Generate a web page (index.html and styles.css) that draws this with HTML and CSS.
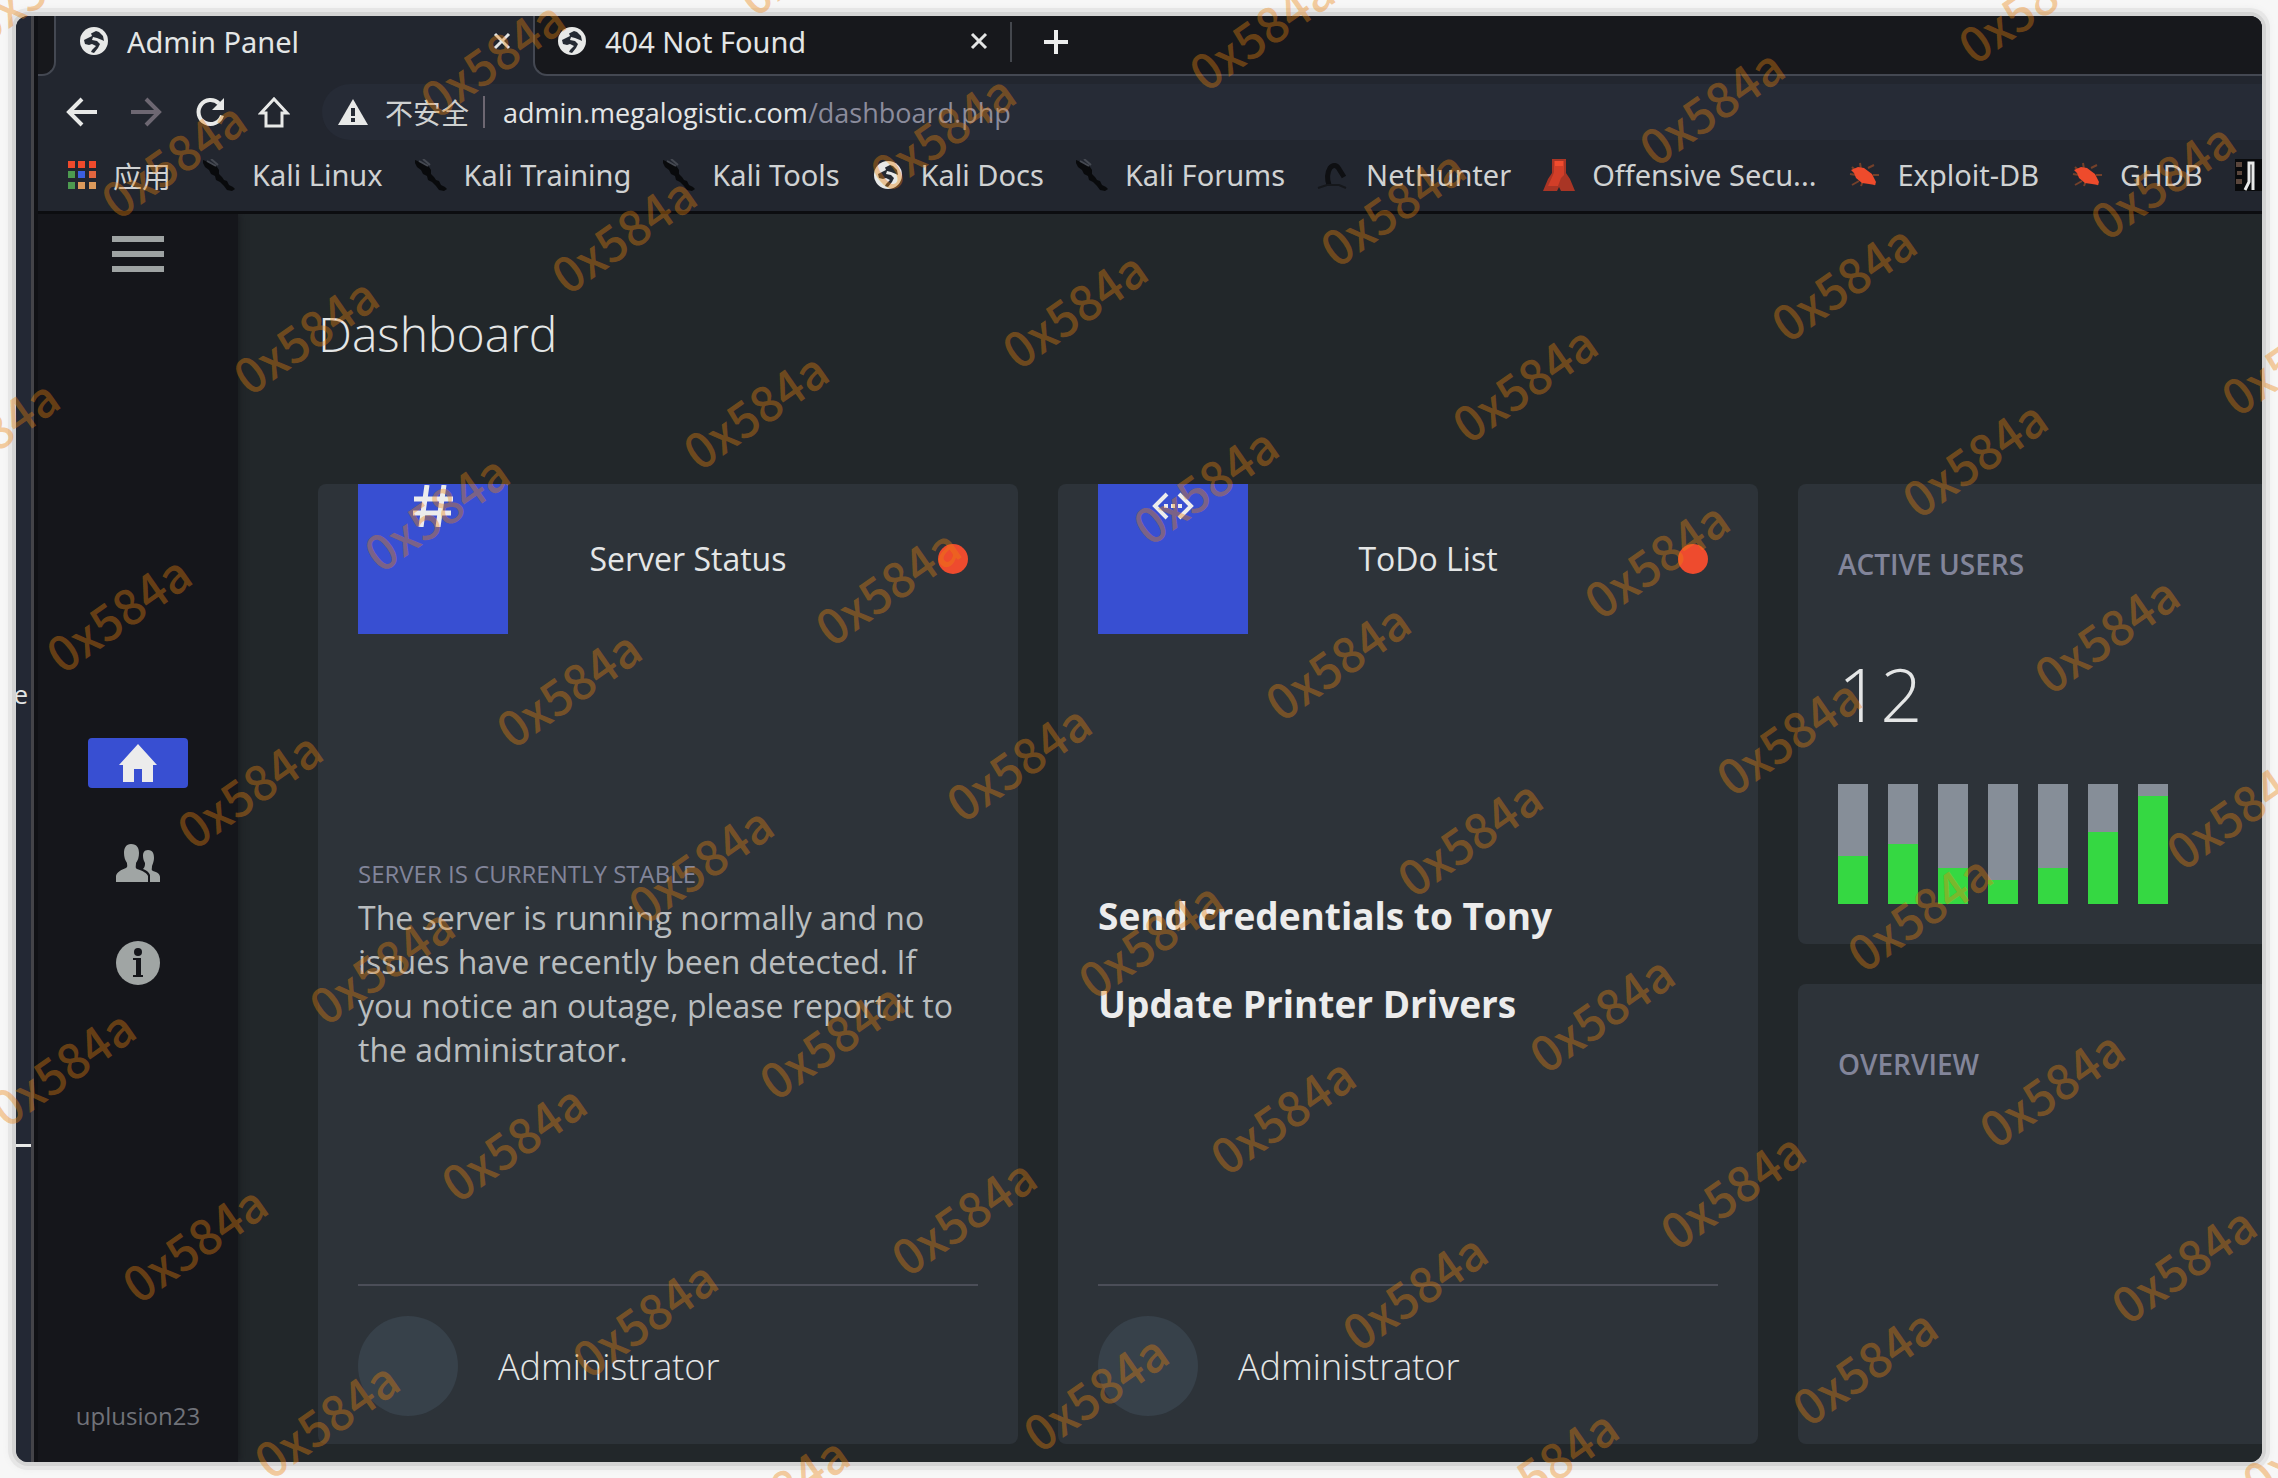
FILE: index.html
```html
<!DOCTYPE html>
<html lang="zh-CN">
<head>
<meta charset="utf-8">
<title>Admin Panel</title>
<link rel="stylesheet" href="styles.css">
</head>
<body>
<svg class="defs" aria-hidden="true">
  <symbol id="globe" viewBox="0 0 28 28"><circle cx="14" cy="14" r="14" fill="#e8e9e8"/><path d="M16 4L11 6.500l1 2.500-4 2-4 2 1 4 4 1 3-1 4 2-4 4-1 2 3 1 4-5 2-4-3-3-5-1 1-3 4 1 5 2 2 1-1-5-4-4z" fill="#252a33"/></symbol>
  <symbol id="close" viewBox="0 0 18 18"><path d="M2 2l14 14M16 2L2 16" stroke="#e4e5e5" stroke-width="3" fill="none"/></symbol>
  <symbol id="kali" viewBox="0 0 32 32"><path d="M0 1l5 2 6 2 3 3 2 3 0 4 3 3 2 3 3 1 2 4 4 2 2 2-3 2-5-1-3-4-4-4-4-2-1-4-4-2-2-4-4-3-2-4z" fill="#090a0c"/><path d="M4 2l9 5M8 0l7 6" stroke="#454951" stroke-width="2"/></symbol>
  <symbol id="bug" viewBox="0 0 32 32"><path d="M4 8l4 4M12 4l1 6M20 9l6-3M25 16h6M2 15l6 1M4 26l7-4M13 27l2-5M27 26l-3-4" stroke="#74402a" stroke-width="2"/><path d="M3 11l7-3 6 1 8 6 4 8-1 3-6-1-7-1-6-5-2-5z" fill="#ee4b2c"/></symbol>
</svg>
<div class="desktop">
  <div class="behind"><span class="behind-text">e</span><i class="behind-line"></i></div>
  <div class="browser">
    <div class="tabs">
      <div class="tab-prev"></div>
      <div class="tab active"><svg class="fav"><use href="#globe"/></svg><span class="tab-title">Admin Panel</span><button class="icon-btn" aria-label="Close tab"><svg class="x"><use href="#close"/></svg></button></div>
      <div class="tab inactive"><svg class="fav"><use href="#globe"/></svg><span class="tab-title">404 Not Found</span><button class="icon-btn" aria-label="Close tab"><svg class="x"><use href="#close"/></svg></button></div>
      <div class="strip"><i class="strip-sep"></i><button class="icon-btn" aria-label="New tab"><svg class="plus" viewBox="0 0 24 24"><path d="M12 0v24M0 12h24" stroke="#eceded" stroke-width="4"/></svg></button></div>
    </div>
    <div class="toolbar">
      <button class="icon-btn" aria-label="Back"><svg class="ti" viewBox="0 0 32 32"><path d="M31 16H4M16 3L3 16l13 13" fill="none" stroke="#e8e9e8" stroke-width="4"/></svg></button>
      <button class="icon-btn" aria-label="Forward"><svg class="ti" viewBox="0 0 32 32"><path d="M1 16h27M16 3l13 13-13 13" fill="none" stroke="#6d6772" stroke-width="4"/></svg></button>
      <button class="icon-btn" aria-label="Reload"><svg class="ti" viewBox="0 0 32 32"><path d="M28 19.500A12 12 0 1 1 25 7.500" fill="none" stroke="#e8e9e8" stroke-width="4"/><path d="M30 2v12H18z" fill="#e8e9e8"/></svg></button>
      <button class="icon-btn" aria-label="Home"><svg class="ti" viewBox="0 0 32 32"><path d="M16 3L3 17h5v13h16V17h5z" fill="none" stroke="#e8e9e8" stroke-width="3"/></svg></button>
      <div class="address">
        <svg class="warn" viewBox="0 0 30 26"><path d="M15 0l15 26H0z" fill="#e8e9e8"/><path d="M15 9v8M15 19v4" stroke="#252a34" stroke-width="4"/></svg>
        <span class="insecure">不安全</span><i class="addr-sep"></i>
        <span class="url">admin.megalogistic.com<span class="path">/dashboard.php</span></span>
      </div>
    </div>
    <nav class="bookmarks">
      <a href="#"><svg class="apps" viewBox="0 0 28 28"><g fill="#f04a2c"><path d="M0 0h7v7H0zM10 0h7v7h-7zM21 0h7v7h-7z"/></g><path d="M0 10h7v7H0zM0 21h7v7H0z" fill="#4d9a50"/><path d="M10 10h7v7h-7z" fill="#3c5fe0"/><path d="M21 10h7v7h-7z" fill="#e2653f"/><path d="M10 21h7v7h-7zM21 21h7v7h-7z" fill="#dc9a5c"/></svg>应用</a>
      <a href="#"><svg class="bi"><use href="#kali"/></svg>Kali Linux</a>
      <a href="#"><svg class="bi"><use href="#kali"/></svg>Kali Training</a>
      <a href="#"><svg class="bi"><use href="#kali"/></svg>Kali Tools</a>
      <a href="#"><svg class="bi globe-sm"><use href="#globe"/></svg>Kali Docs</a>
      <a href="#"><svg class="bi"><use href="#kali"/></svg>Kali Forums</a>
      <a href="#"><svg class="bi" viewBox="0 0 32 32"><path d="M12 26c-2-6-2-12 1-17 3-4 7-3 9 1l5 8" fill="none" stroke="#0e0f12" stroke-width="5"/><path d="M1 29l9-3h12l7 3" fill="none" stroke="#15171b" stroke-width="2"/></svg>NetHunter</a>
      <a href="#"><svg class="bi" viewBox="0 0 32 32"><path d="M9 0h14v14l4 6 5 12H18l-2-4-2 4H0l5-12 4-6z" fill="#a93525"/><path d="M11 2h10v14l-3 3-3 8H5l5-11 1-3z" fill="#d23e28"/><path d="M12 2h8v5h-8z" fill="#f04c2e"/></svg>Offensive Secu...</a>
      <a href="#"><svg class="bi"><use href="#bug"/></svg>Exploit-DB</a>
      <a href="#"><svg class="bi"><use href="#bug"/></svg>GHDB</a>
      <a href="#" aria-label="More"><svg class="bi" viewBox="0 0 32 32"><path d="M0 0h32v32H0z" fill="#090a0c"/><path d="M1 3h6v5H1zM1 20h6v5H1zM2 12h5v4H2z" fill="#5a463c"/><path d="M10 31l4-8V4h4v27" fill="none" stroke="#e8e9e8" stroke-width="3"/></svg></a>
    </nav>
    <div class="page">
      <aside class="sidebar">
        <button class="menu" aria-label="Menu"><i></i><i></i><i></i></button>
        <nav class="side-nav">
          <a class="on" href="#" aria-label="Home"><svg width="40" height="40" viewBox="0 0 40 40"><path d="M20 1l19 21h-4v17H24V26h-8v13H5V22H1z" fill="#ececec"/></svg></a>
          <a href="#" aria-label="Users"><svg width="46" height="40" viewBox="0 0 46 40"><path d="M16 1c6 0 8 4 8 9 0 4-1 7-3 10 0 3-1 5 1 6 6 2 10 4 11 7v6H1v-6c1-4 5-6 10-8 2-1 1-3 1-5-2-3-3-6-3-10 0-5 2-9 7-9z" fill="#a0a5a4"/><path d="M33 7c5 0 6 4 6 8 0 3-1 5-2 8 0 3-1 4 1 5 4 1 7 3 7 6v5H35v-7c-1-3-4-5-7-6 2-2 2-4 2-6-1-2-2-4-2-7 0-3 1-6 5-6z" fill="#a0a5a4"/></svg></a>
          <a href="#" aria-label="Information"><svg width="46" height="46" viewBox="0 0 46 46"><circle cx="23" cy="23" r="22" fill="#a0a5a4"/><circle cx="23" cy="12" r="4" fill="#15161b"/><path d="M18 18h8v17h2v2H18v-2h3V20h-3z" fill="#15161b"/></svg></a>
        </nav>
        <span class="credit">uplusion23</span>
      </aside>
      <main class="main">
        <h1>Dashboard</h1>
        <div class="grid">
          <section class="card tall">
            <header class="card-head"><div class="tile"><svg width="42" height="42" viewBox="0 0 42 42"><path d="M15 0l-6 42M32 0l-6 42M2 14h39M1 28h38" stroke="#ececec" stroke-width="5" fill="none"/></svg></div><h2>Server Status</h2><i class="dot"></i></header>
            <div class="card-body"><h3>SERVER IS CURRENTLY STABLE</h3><p>The server is running normally and no issues have recently been detected. If you notice an outage, please report it to the administrator.</p></div>
            <footer class="card-foot"><i class="avatar"></i><span>Administrator</span></footer>
          </section>
          <section class="card tall">
            <header class="card-head"><div class="tile"><svg width="42" height="42" viewBox="0 0 42 42"><path d="M15 9L3 21l12 12M27 9l12 12-12 12" stroke="#ececec" stroke-width="4" fill="none"/><path d="M12 19h4v4h-4zM19 19h4v4h-4zM26 19h4v4h-4z" fill="#ececec"/></svg></div><h2>ToDo List</h2><i class="dot"></i></header>
            <div class="card-body"><ul class="todo"><li>Send credentials to Tony</li><li>Update Printer Drivers</li></ul></div>
            <footer class="card-foot"><i class="avatar"></i><span>Administrator</span></footer>
          </section>
          <div class="stack">
            <section class="card stat"><h2 class="stat-label">ACTIVE USERS</h2><div class="num">12</div>
              <div class="bars"><i style="--v:40%"></i><i style="--v:50%"></i><i style="--v:30%"></i><i style="--v:20%"></i><i style="--v:30%"></i><i style="--v:60%"></i><i style="--v:90%"></i></div>
            </section>
            <section class="card stat"><h2 class="stat-label">OVERVIEW</h2></section>
          </div>
        </div>
      </main>
    </div>
  </div>
</div>
<div class="marks" id="marks"></div>
<script src="marks.js"></script>
</body>
</html>
```

FILE: styles.css
```css
* { box-sizing: border-box; }
html, body { height: 100%; }
body { margin: 0; padding: 16px; background: #f7f7f7; overflow: hidden; position: relative; font-family: "Open Sans", "Noto Sans CJK SC", sans-serif; color: #e4e6e6; }
h1, h2, h3, p, ul { margin: 0; padding: 0; font-weight: 400; }
ul { list-style: none; }
a { color: inherit; text-decoration: none; }
i { display: block; flex: none; }
svg { display: block; flex: none; }
.defs { position: absolute; width: 0; height: 0; }
.icon-btn { display: block; padding: 0; border: 0; background: none; flex: none; }

.desktop { display: flex; height: 100%; border-radius: 12px; overflow: hidden; background: #22262f; box-shadow: 0 0 0 4px #d4d4d4, 0 0 0 8px #e6e6e6, 0 0 6px 8px #eeeeee; }
.behind { flex: none; width: 22px; padding-top: 654px; background: #232834; border-right: 4px solid #101115; box-shadow: inset -3px 0 #444449; }
.behind-text { display: block; height: 48px; font-size: 26px; line-height: 48px; width: 12px; direction: rtl; }
.behind-line { width: 15px; height: 3px; margin-top: 426px; background: #e8e9e8; }
.browser { flex: 1; min-width: 0; display: flex; flex-direction: column; }

.tabs { display: flex; flex: none; height: 60px; font-family: "Noto Sans", sans-serif; font-size: 29px; background: #22262f; }
.tab-prev { width: 18px; background: #17181c; border: 2px solid #444852; border-width: 0 2px 2px 0; border-radius: 0 0 14px 0; }
.tab { width: 477px; display: flex; align-items: center; padding: 0 22px 10px 24px; flex: none; }
.tab-title { flex: 1; margin-left: 19px; }
.tab.inactive { background: #17181c; border: 2px solid #444852; border-width: 0 0 2px 2px; border-radius: 0 0 0 14px; padding: 0 22px 8px 23px; }
.strip { flex: 1; display: flex; align-items: center; padding-bottom: 6px; background: #17181c; border-bottom: 2px solid #444852; }
.strip-sep { width: 2px; height: 40px; background: #44474d; margin-right: 32px; }
.fav { width: 28px; height: 28px; }
.x { width: 18px; height: 18px; }
.plus { width: 24px; height: 24px; }

.toolbar { display: flex; flex: none; align-items: center; gap: 32px; height: 72px; padding-left: 28px; }
.ti { width: 32px; height: 32px; }
.address { flex: 1; display: flex; align-items: center; height: 56px; padding-left: 16px; background: #262b36; border-radius: 28px 0 0 28px; font-size: 28px; white-space: nowrap; }
.warn { width: 30px; height: 26px; }
.insecure { margin-left: 17px; color: #cfd1d1; }
.addr-sep { width: 2px; height: 32px; margin: 0 18px 0 14px; background: #6d6772; }
.url { font-size: 27px; }
.path { color: #8b8c9c; }
.bookmarks { display: flex; flex: none; align-items: center; gap: 32px; height: 66px; padding-left: 30px; padding-bottom: 10px; border-bottom: 3px solid #0c0d10; font-family: "Noto Sans", "Noto Sans CJK SC", sans-serif; font-size: 29px; white-space: nowrap; overflow: hidden; }
.bookmarks a { display: flex; align-items: center; gap: 17px; flex: none; color: #d0d2d3; }
.apps { width: 28px; height: 28px; }
.bi { width: 32px; height: 32px; }
.globe-sm { height: 28px; }

.page { flex: 1; min-height: 0; display: flex; background: #22272a; overflow: hidden; }
.sidebar { flex: none; width: 200px; display: flex; flex-direction: column; align-items: center; padding: 22px 0 28px; background: #15161b; box-shadow: 0 0 8px #15161b; }
.menu { display: flex; flex-direction: column; gap: 9px; padding: 0; border: 0; background: none; }
.menu i { width: 52px; height: 6px; background: #9ea3a3; }
.side-nav { display: flex; flex-direction: column; gap: 50px; margin-top: 466px; }
.side-nav a { width: 100px; height: 50px; display: flex; align-items: center; justify-content: center; border-radius: 4px; }
.side-nav .on { background: #384fd2; }
.credit { margin-top: auto; font-size: 24px; line-height: 36px; color: #707279; }

.main { flex: 1; min-width: 0; padding: 80px 0 0 80px; }
h1 { font-size: 48px; line-height: 80px; font-weight: 300; margin-bottom: 110px; }
.grid { display: grid; grid-template-columns: 700px 700px 700px; gap: 40px; }
.card { background: #2d3339; border-radius: 8px; }
.tall { display: flex; flex-direction: column; height: 960px; padding: 0 40px 28px; }
.card-head { display: flex; align-items: center; height: 150px; padding-right: 10px; }
.tile { width: 150px; height: 150px; display: flex; justify-content: center; align-items: flex-start; padding-top: 1px; background: #384fd2; }
.card-head h2 { flex: 1; text-align: center; font-size: 32px; line-height: 44px; }
.dot { width: 30px; height: 30px; margin-left: 70px; border-radius: 50%; background: #ee4b2e; }
.card-body { flex: 1; display: flex; flex-direction: column; justify-content: center; padding-top: 6px; line-height: 44px; }
.card-body h3 { font-size: 24px; color: #82859a; }
.card-body p { font-size: 32px; color: #b9bdbf; }
.todo { padding-bottom: 4px; font-size: 37px; font-weight: 700; line-height: 88px; color: #ececec; }
.card-foot { display: flex; align-items: center; gap: 40px; padding-top: 30px; border-top: 2px solid #4b4e58; font-size: 36px; font-weight: 300; }
.avatar { width: 100px; height: 100px; border-radius: 50%; background: #37414a; }
.stack { display: grid; grid-template-rows: 1fr 1fr; gap: 40px; }
.stat { padding: 60px 40px 40px; display: flex; flex-direction: column; }
.stat-label { font-size: 28px; line-height: 40px; font-weight: 600; color: #82859a; }
.num { font-size: 74px; line-height: 100px; font-weight: 300; margin-top: 60px; }
.bars { display: flex; gap: 20px; margin-top: auto; }
.bars i { width: 30px; height: 120px; background: linear-gradient(to top, #35d842 var(--v), #868e98 var(--v)); }

.marks { position: absolute; inset: 0; overflow: hidden; pointer-events: none; }
.marks span { position: absolute; font-family: "Noto Sans CJK SC", sans-serif; font-size: 48px; font-weight: 500; line-height: 48px; color: rgba(236, 131, 12, .39); transform-origin: 13px 27px; transform: rotate(-35deg); }
```

FILE: marks.js
```js
// Repeats the owner mark over the page on a slanted lattice.
const layer = document.getElementById('marks');
for (let i = -4; i <= 8; i++) {
  for (let j = -10; j <= 12; j++) {
    const x = Math.round(687 + i * 450.4 + j * 131.7);
    const y = Math.round(423 + i * 74.7 + j * 176.2);
    if (x < -120 || x > layer.clientWidth - 8 || y < -40 || y > layer.clientHeight + 50) continue;
    const mark = document.createElement('span');
    mark.textContent = '0x584a';
    mark.style.left = x + 'px';
    mark.style.top = y + 'px';
    layer.append(mark);
  }
}
```
